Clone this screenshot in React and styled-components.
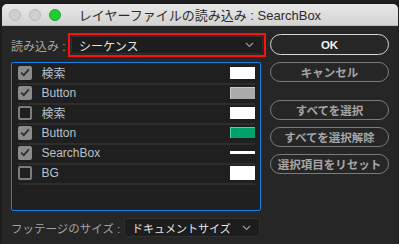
import React from "react";
import styled, { createGlobalStyle } from "styled-components";

const Global = createGlobalStyle`
  html, body { margin: 0; padding: 0; background: #1e1e1e; }
  body { width: 399px; height: 244px; overflow: hidden; }
  * { box-sizing: border-box; }
`;

const FONT = `"Liberation Sans", "Noto Sans CJK JP", sans-serif`;

const Window = styled.div`
  margin: 4px 1px 0 2px;
  height: 240px;
  display: flex;
  flex-direction: column;
  background: #262626;
  border-radius: 5px 5px 0 0;
  overflow: hidden;
  font-family: ${FONT};
`;

const TitleBar = styled.div`
  position: relative;
  height: 22px;
  flex: none;
  display: flex;
  align-items: center;
  justify-content: center;
  background: linear-gradient(#e8e8e8, #d3d3d3);
  border-bottom: 1px solid #b8b8b8;
  color: #2c2c2c;
  font-size: 13px;
`;

const Lights = styled.div`
  position: absolute;
  left: 7px;
  top: 5px;
  display: flex;
  gap: 8px;
`;

const Light = styled.span`
  width: 12px;
  height: 12px;
  border-radius: 50%;
  background: ${(p) => (p.$on ? "#1fcd30" : "#cfcfcf")};
  border: 1px solid ${(p) => (p.$on ? "#17b026" : "#b9b9b9")};
`;

const Body = styled.div`
  flex: 1;
  display: grid;
  grid-template-columns: 250px 119px;
  column-gap: 9px;
  padding: 7px 0 0 9px;
`;

const LeftCol = styled.div`
  display: flex;
  flex-direction: column;
`;

const FieldRow = styled.div`
  display: flex;
  align-items: center;
  height: ${(p) => p.$h}px;
  margin-top: ${(p) => p.$mt || 0}px;
`;

const Label = styled.span`
  color: #a3a3a3;
  font-size: ${(p) => p.$size || 12}px;
  width: ${(p) => p.$w}px;
  flex: none;
  white-space: nowrap;
`;

const Highlight = styled.div`
  width: 198px;
  height: 24px;
  border: 2px solid #ff1010;
  padding: 1px;
  flex: none;
`;

const Select = styled.div`
  height: 100%;
  width: ${(p) => (p.$w ? `${p.$w}px` : "100%")};
  display: flex;
  align-items: center;
  justify-content: space-between;
  padding: 0 8px 0 7px;
  background: #1d1d1d;
  border: 1px solid #2f2f2f;
  border-radius: 3px;
  color: #e6e6e6;
  font-size: ${(p) => p.$size || 12}px;
`;

const Chevron = () => (
  <svg width="9" height="6" viewBox="0 0 9 6">
    <path d="M1 1l3.5 3.5L8 1" fill="none" stroke="#9a9a9a" strokeWidth="1.1" />
  </svg>
);

const Panel = styled.div`
  margin-top: 5px;
  height: 149px;
  width: 250px;
  border: 1.5px solid #1582e6;
  border-radius: 2px;
  background: #1f1f1f;
  padding: 1.5px 5px 0 5.5px;
`;

const Row = styled.div`
  height: 20px;
  display: flex;
  align-items: center;
  padding-bottom: 2px;
  border-bottom: 2px solid #2d2d2d;
`;

const Box = styled.span`
  width: 14px;
  height: 14px;
  flex: none;
  border-radius: 2px;
  display: flex;
  align-items: center;
  justify-content: center;
  background: ${(p) => (p.$checked ? "#8b8b8b" : "#1f1f1f")};
  border: ${(p) => (p.$checked ? "none" : "2px solid #7d7d7d")};
`;

const Name = styled.span`
  margin-left: 10px;
  flex: 1;
  color: #b9c0c9;
  font-size: 12px;
`;

const Swatch = styled.span`
  width: 25px;
  height: ${(p) => p.$h}px;
  background: ${(p) => p.$c};
  border-left: ${(p) => (p.$edge ? `1px solid ${p.$edge}` : "none")};
  border-top: ${(p) => (p.$edge ? `1px solid ${p.$edge}` : "none")};
`;

const RightCol = styled.div`
  display: flex;
  flex-direction: column;
  padding-top: 1px;
`;

const Button = styled.div`
  height: ${(p) => p.$h || 20}px;
  margin-top: ${(p) => p.$mt || 0}px;
  border-radius: 11px;
  border: 1.5px solid ${(p) => (p.$primary ? "#d6d6d6" : "#7b7b7b")};
  display: flex;
  align-items: center;
  justify-content: center;
  color: ${(p) => (p.$primary ? "#f2f2f2" : "#a6a6a6")};
  font-size: 11.5px;
  font-weight: ${(p) => (p.$primary ? 700 : 600)};
`;

const Check = () => (
  <svg width="10" height="9" viewBox="0 0 10 9">
    <path d="M1.2 4.6l2.6 2.6L8.8 1.4" fill="none" stroke="#2e2e2e" strokeWidth="1.8" />
  </svg>
);

const layers = [
  { name: "検索", checked: true, c: "#ffffff", h: 12 },
  { name: "Button", checked: true, c: "#aaaaaa", h: 12, edge: "#c9c9c9" },
  { name: "検索", checked: false, c: "#ffffff", h: 12 },
  { name: "Button", checked: true, c: "#00a36b", h: 11, edge: "#4fd3a3" },
  { name: "SearchBox", checked: true, c: "#ffffff", h: 3 },
  { name: "BG", checked: false, c: "#ffffff", h: 14 },
];

export default function App() {
  return (
    <>
      <Global />
      <Window>
        <TitleBar>
          <Lights>
            <Light />
            <Light />
            <Light $on />
          </Lights>
          レイヤーファイルの読み込み : SearchBox
        </TitleBar>
        <Body>
          <LeftCol>
            <FieldRow $h={24}>
              <Label $w={57}>読み込み :</Label>
              <Highlight>
                <Select>
                  シーケンス
                  <Chevron />
                </Select>
              </Highlight>
            </FieldRow>
            <Panel>
              {layers.map((l, i) => (
                <Row key={i}>
                  <Box $checked={l.checked}>{l.checked && <Check />}</Box>
                  <Name>{l.name}</Name>
                  <Swatch $c={l.c} $h={l.h} $edge={l.edge} />
                </Row>
              ))}
            </Panel>
            <FieldRow $h={19} $mt={7}>
              <Label $w={113} $size={11.5}>フッテージのサイズ :</Label>
              <Select $w={136} $size={11}>
                ドキュメントサイズ
                <Chevron />
              </Select>
            </FieldRow>
          </LeftCol>
          <RightCol>
            <Button $primary $h={21}>OK</Button>
            <Button $mt={7}>キャンセル</Button>
            <Button $mt={18}>すべてを選択</Button>
            <Button $mt={7}>すべてを選択解除</Button>
            <Button $mt={7}>選択項目をリセット</Button>
          </RightCol>
        </Body>
      </Window>
    </>
  );
}
